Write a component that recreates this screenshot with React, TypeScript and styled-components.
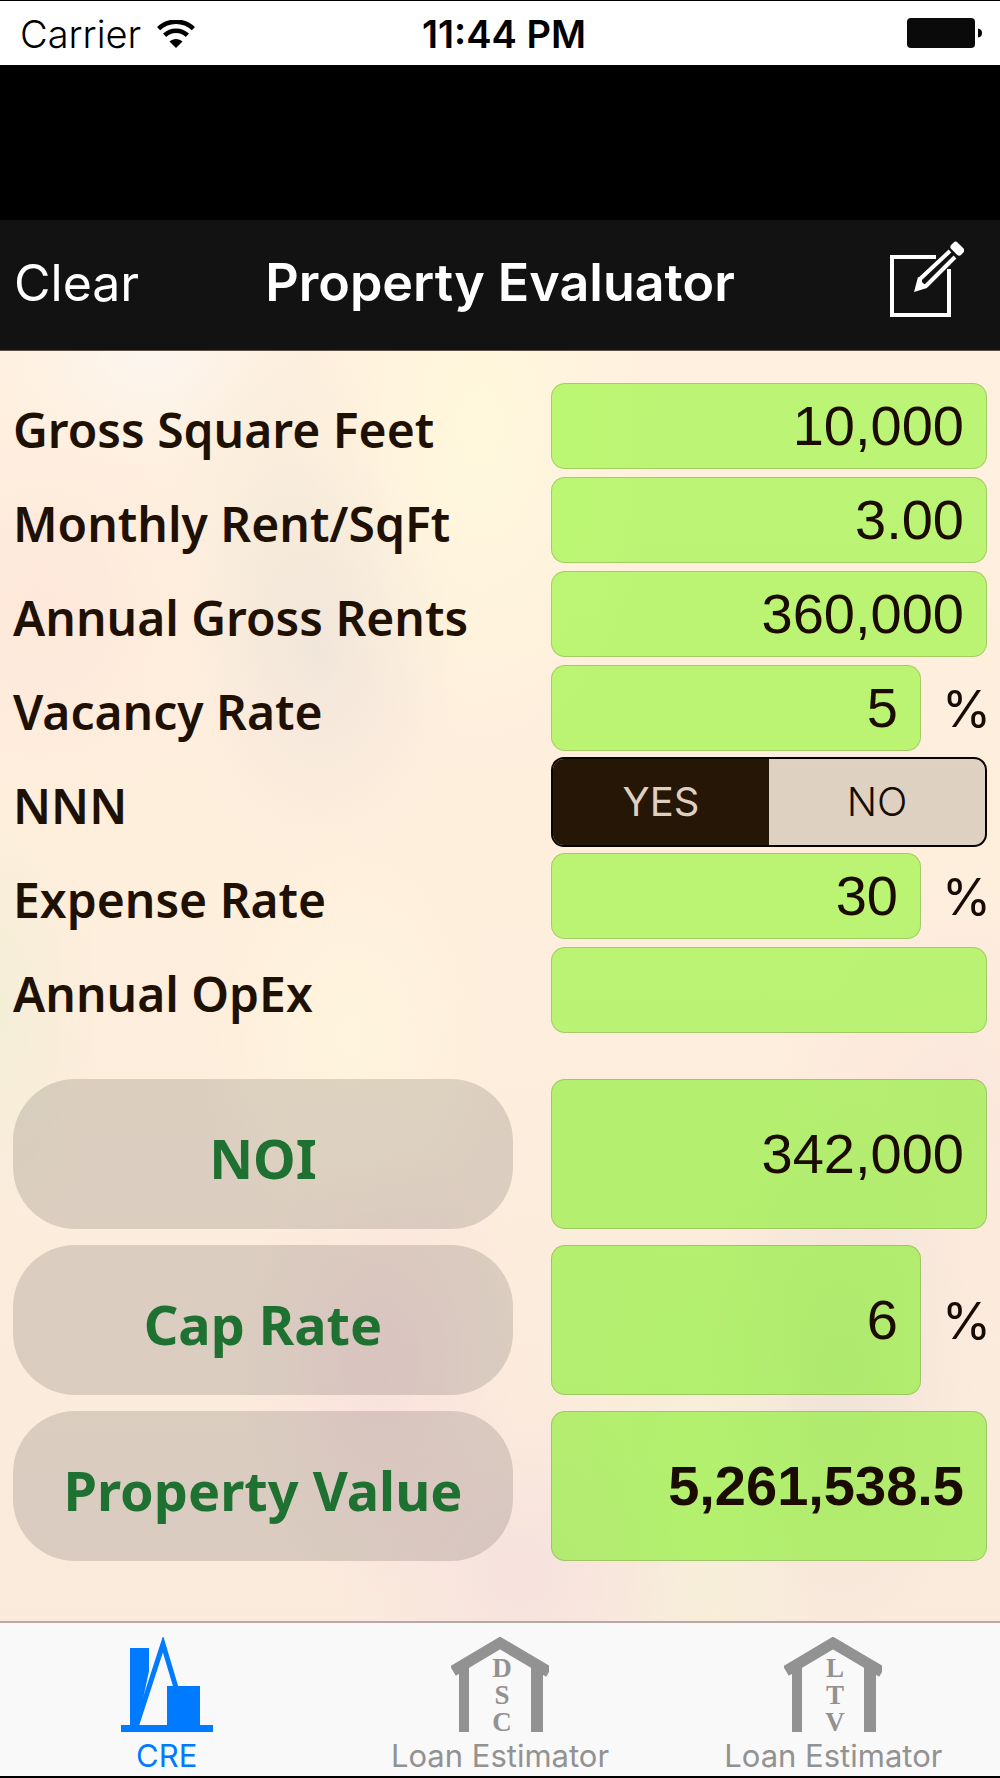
import React, { useState } from "react";
import styled, { createGlobalStyle } from "styled-components";

const ui = `Inter, "Liberation Sans", sans-serif`;
const hand = `"Chalkboard SE", "Noto Sans", "Open Sans", sans-serif`;
const digits = `"Liberation Sans", Arial, sans-serif`;

const GlobalStyle = createGlobalStyle`
  *, *::before, *::after { box-sizing: border-box; }
  body { margin: 0; background: #000; font-family: ${ui}; }
  button, input { font: inherit; margin: 0; }
`;

const Screen = styled.div`
  display: flex;
  flex-direction: column;
  min-height: 100vh;
  border-top: 1px solid #000;
  border-bottom: 2px solid #000;
`;

const StatusBar = styled.header`
  display: grid;
  grid-template-columns: 1fr auto 1fr;
  align-items: center;
  height: 64px;
  padding: 0 18px 0 20px;
  background: #fff;
  color: #000;
  font-size: 38px;
  line-height: 44px;
`;

const Carrier = styled.div`
  display: flex;
  align-items: center;
  gap: 16px;
  padding-top: 2px;
  font-weight: 300;
`;

const Clock = styled.div`
  padding: 2px 0 0 6px;
  font-weight: 600;
`;

const Battery = styled.svg`
  justify-self: end;
`;

const NavBar = styled.nav`
  display: grid;
  grid-template-columns: 1fr auto 1fr;
  align-items: center;
  height: 130px;
  margin-top: 155px;
  padding: 0 14px 4px;
  background: #121212;
  color: #fff;
`;

const NavButton = styled.button<{ $end?: boolean }>`
  justify-self: ${(p) => (p.$end ? "end" : "start")};
  display: flex;
  padding: ${(p) => (p.$end ? "0 22px 0 0" : "0")};
  border: 0;
  background: none;
  color: inherit;
  font-size: 50px;
  line-height: 64px;
  cursor: pointer;
`;

const Title = styled.h1`
  margin: 0;
  font-size: 52px;
  line-height: 64px;
  font-weight: 600;
`;

const Main = styled.main`
  flex: 1;
  padding: 32px 13px 60px;
  border-top: 1px solid #5c504c;
  background:
    radial-gradient(ellipse 14% 16% at 32% 24%, rgba(230, 222, 217, 0.5), transparent),
    radial-gradient(ellipse 12% 16% at 28% 12%, rgba(244, 234, 216, 0.6), transparent),
    radial-gradient(ellipse 16% 10% at 15% 0%, rgba(252, 246, 240, 0.9), transparent),
    radial-gradient(ellipse 18% 26% at 48% 6%, rgba(255, 249, 220, 0.9), transparent),
    radial-gradient(ellipse 18% 16% at 4% 20%, rgba(253, 226, 216, 0.6), transparent),
    radial-gradient(ellipse 10% 18% at 0% 52%, rgba(243, 238, 214, 0.9), transparent),
    radial-gradient(ellipse 16% 18% at 35% 54%, rgba(255, 245, 222, 0.9), transparent),
    radial-gradient(ellipse 14% 18% at 38% 80%, rgba(249, 218, 220, 0.6), transparent),
    radial-gradient(ellipse 18% 14% at 52% 96%, rgba(246, 224, 222, 0.8), transparent),
    radial-gradient(ellipse 12% 24% at 70% 92%, rgba(246, 240, 216, 0.9), transparent),
    radial-gradient(ellipse 14% 22% at 84% 80%, rgba(236, 224, 214, 0.8), transparent),
    radial-gradient(ellipse 18% 18% at 96% 60%, rgba(250, 228, 220, 0.7), transparent),
    linear-gradient(#fff0df, #feeedc 45%, #faeadc);
`;

const Fields = styled.div`
  display: grid;
  grid-auto-rows: 86px;
  gap: 8px;
`;

const Results = styled.div`
  display: grid;
  grid-auto-rows: 150px;
  gap: 16px;
  margin-top: 46px;
`;

const Row = styled.div`
  display: grid;
  grid-template-columns: minmax(0, 500fr) minmax(0, 436fr);
  grid-template-rows: 100%;
  column-gap: 38px;
  align-items: center;
`;

const Label = styled.label`
  padding-top: 8px;
  color: #1e1103;
  font-family: ${hand};
  font-size: 48px;
  line-height: 64px;
  font-weight: 600;
  white-space: nowrap;
`;

const Entry = styled.div`
  display: flex;
  align-items: center;
  height: 100%;
`;

const Value = styled.input<{ $bold?: boolean; $result?: boolean }>`
  flex: 1;
  min-width: 0;
  height: 100%;
  padding: 0 22px 2px;
  border: 1px solid rgba(120, 130, 70, 0.35);
  border-radius: 14px;
  outline: 0;
  background: ${(p) => (p.$result ? "rgba(110, 242, 4, 0.5)" : "rgba(119, 249, 10, 0.5)")};
  color: #1c0c00;
  font-family: ${digits};
  font-size: 56px;
  font-weight: ${(p) => (p.$bold ? 700 : 400)};
  text-align: right;
`;

const Unit = styled.span`
  width: 70px;
  margin-right: -4px;
  padding-top: 2px;
  color: #160c04;
  font-size: 50px;
  line-height: 64px;
  text-align: right;
`;

const Segments = styled.div`
  display: grid;
  grid-template-columns: 1fr 1fr;
  height: 90px;
  background: rgba(0, 0, 0, 0.12);
  border: 2px solid #080400;
  border-radius: 13px;
  overflow: hidden;
`;

const Segment = styled.label<{ $on: boolean }>`
  position: relative;
  display: grid;
  place-items: center;
  background: ${(p) => (p.$on ? "#251606" : "transparent")};
  color: ${(p) => (p.$on ? "#decfbe" : "#160c04")};
  font-size: 40px;
  line-height: 48px;
  font-weight: ${(p) => (p.$on ? 400 : 300)};
  cursor: pointer;
`;

const HiddenRadio = styled.input`
  position: absolute;
  opacity: 0;
`;

const Compute = styled.button`
  height: 100%;
  padding: 8px 0 0;
  border: 0;
  border-radius: 62px;
  background: rgba(0, 0, 0, 0.13);
  color: #1f7132;
  font-family: ${hand};
  font-size: 54px;
  line-height: 72px;
  font-weight: 700;
  white-space: nowrap;
  cursor: pointer;
`;

const TabBar = styled.nav`
  display: grid;
  grid-template-columns: repeat(3, 1fr);
  height: 155px;
  border-top: 2px solid #b5aaa5;
  background: #f9f9f9;
`;

const Tab = styled.button<{ $active?: boolean }>`
  display: flex;
  flex-direction: column;
  align-items: center;
  padding: 14px 0 0;
  border: 0;
  background: none;
  color: ${(p) => (p.$active ? "#007aff" : "#929292")};
  font-size: 31px;
  line-height: 36px;
  cursor: pointer;
`;

function WifiIcon() {
  return (
    <svg width="38" height="28" viewBox="0 0 38 28" fill="none" aria-hidden="true">
      <path d="M1.600 8.600C11.500-.6 26.500-.6 36.400 8.600" stroke="#000" strokeWidth="4.600" />
      <path d="M7.600 15.200C14 9.200 24 9.200 30.400 15.200" stroke="#000" strokeWidth="4.600" />
      <path d="M12.500 21.600C16.200 18 21.800 18 25.500 21.600L19 28Z" fill="#000" />
    </svg>
  );
}

function BatteryIcon() {
  return (
    <Battery width="75" height="30" viewBox="0 0 75 30" aria-label="Battery full">
      <rect width="68" height="30" rx="4" fill="#0a0a0a" />
      <path d="M71 10.500Q75 11 75 15T71 19.500Z" fill="#000" />
    </Battery>
  );
}

function ComposeIcon() {
  return (
    <svg width="76" height="86" viewBox="0 0 76 86" fill="none" stroke="#fff" aria-hidden="true">
      <path d="M48 17H4V75H61V29" strokeWidth="4" />
      <path d="M62 11L32 39M67 17L38 46" strokeWidth="4" />
      <path d="M26 52L30 37L34 39V42L36 44H40L39 48Z" fill="#fff" stroke="none" />
      <rect x="-4" y="-7" width="9" height="14" rx="3" fill="#fff" stroke="none" transform="translate(69 9) rotate(-45)" />
    </svg>
  );
}

function SkylineIcon() {
  return (
    <svg width="92" height="101" viewBox="0 0 92 101" aria-hidden="true">
      <path d="M9 11H28V34L16 90H9Z" fill="currentColor" />
      <path d="M15 91L42 8L64 91Z" fill="#f9f9f9" />
      <path d="M15 90L42 7L56 54" fill="none" stroke="currentColor" strokeWidth="5" />
      <path d="M46 49H79V90H46ZM0 88H92V95H0Z" fill="currentColor" />
    </svg>
  );
}

function HouseIcon({ letters }: { letters: string }) {
  return (
    <svg width="98" height="101" viewBox="2 0 98 101" aria-hidden="true">
      <path d="M4 34L51 6L100 35" fill="none" stroke="currentColor" strokeWidth="11" />
      <path d="M10 30H20V95H10ZM82 30H94V95H82Z" fill="currentColor" />
      <text
        fill="currentColor"
        fontFamily="'Liberation Serif', serif"
        fontWeight="700"
        fontSize="27"
        textAnchor="middle"
      >
        {letters.split("").map((letter, i) => (
          <tspan key={letter} x="53" y={40 + i * 27}>
            {letter}
          </tspan>
        ))}
      </text>
    </svg>
  );
}

type FieldProps = { id: string; label: string; value: string; unit?: string };

function Field({ id, label, value, unit }: FieldProps) {
  return (
    <Row>
      <Label htmlFor={id}>{label}</Label>
      <Entry>
        <Value id={id} defaultValue={value} inputMode="decimal" />
        {unit && <Unit>{unit}</Unit>}
      </Entry>
    </Row>
  );
}

function Result({ id, label, value, unit, bold }: FieldProps & { bold?: boolean }) {
  return (
    <Row>
      <Compute id={id}>{label}</Compute>
      <Entry>
        <Value aria-labelledby={id} defaultValue={value} $bold={bold} $result />
        {unit && <Unit>{unit}</Unit>}
      </Entry>
    </Row>
  );
}

export default function App() {
  const [nnn, setNnn] = useState("YES");
  return (
    <>
      <GlobalStyle />
      <Screen>
        <StatusBar>
          <Carrier>
            Carrier
            <WifiIcon />
          </Carrier>
          <Clock>11:44 PM</Clock>
          <BatteryIcon />
        </StatusBar>
        <NavBar>
          <NavButton>Clear</NavButton>
          <Title>Property Evaluator</Title>
          <NavButton $end aria-label="Compose">
            <ComposeIcon />
          </NavButton>
        </NavBar>
        <Main>
          <Fields>
            <Field id="sqft" label="Gross Square Feet" value="10,000" />
            <Field id="rent" label="Monthly Rent/SqFt" value="3.00" />
            <Field id="gross" label="Annual Gross Rents" value="360,000" />
            <Field id="vacancy" label="Vacancy Rate" value="5" unit="%" />
            <Row>
              <Label as="span" id="nnn">
                NNN
              </Label>
              <Segments role="radiogroup" aria-labelledby="nnn">
                {["YES", "NO"].map((option) => (
                  <Segment key={option} $on={nnn === option}>
                    <HiddenRadio
                      type="radio"
                      name="nnn"
                      checked={nnn === option}
                      onChange={() => setNnn(option)}
                    />
                    {option}
                  </Segment>
                ))}
              </Segments>
            </Row>
            <Field id="expense" label="Expense Rate" value="30" unit="%" />
            <Field id="opex" label="Annual OpEx" value="" />
          </Fields>
          <Results>
            <Result id="noi" label="NOI" value="342,000" />
            <Result id="cap" label="Cap Rate" value="6" unit="%" />
            <Result id="value" label="Property Value" value="5,261,538.5" bold />
          </Results>
        </Main>
        <TabBar>
          <Tab $active>
            <SkylineIcon />
            CRE
          </Tab>
          <Tab>
            <HouseIcon letters="DSC" />
            Loan Estimator
          </Tab>
          <Tab>
            <HouseIcon letters="LTV" />
            Loan Estimator
          </Tab>
        </TabBar>
      </Screen>
    </>
  );
}
